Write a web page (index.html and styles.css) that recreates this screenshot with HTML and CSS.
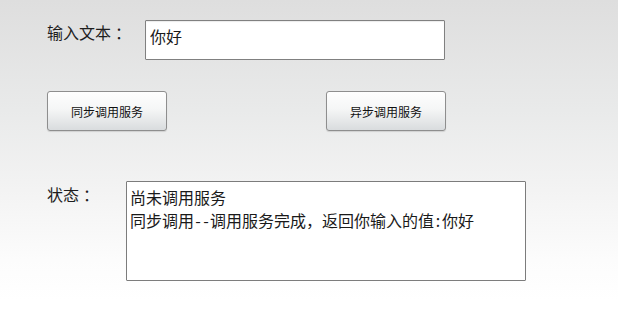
FILE: index.html
```html
<!DOCTYPE html>
<html lang="zh-CN">
<head>
<meta charset="utf-8">
<title>调用服务</title>
<link rel="stylesheet" href="styles.css">
</head>
<body>
<div class="page">
  <div class="row row-input">
    <label class="label label-input" for="txt">输入文本<span class="colon">：</span></label>
    <input id="txt" class="text-field" type="text" value="你好">
  </div>
  <div class="row row-buttons">
    <button class="btn" type="button">同步调用服务</button>
    <button class="btn" type="button">异步调用服务</button>
  </div>
  <div class="row row-status">
    <div class="label label-status">状态<span class="colon">：</span></div>
    <div class="status-box" role="textbox" aria-readonly="true">
      <div class="status-line">尚未调用服务</div>
      <div class="status-line">同步调用<span class="half">-</span><span class="half">-</span>调用服务完成，返回你输入的值<span class="half">:</span>你好</div>
    </div>
  </div>
</div>
</body>
</html>
```
FILE: styles.css
```css
html, body {
  margin: 0;
  padding: 0;
  background: #ffffff;
}
body {
  font-family: "Noto Sans CJK SC", "Noto Sans", sans-serif;
  color: #1c1c1c;
}
.page {
  width: 618px;
  height: 330px;
  box-sizing: border-box;
  padding: 20px 0 0 47px;
  background: linear-gradient(to bottom, #dedede 0px, #e9eaea 110px, #f3f3f3 190px, #fcfcfc 260px, #ffffff 300px);
}
.row {
  display: flex;
  align-items: flex-start;
}
.label {
  font-size: 16px;
  line-height: 23px;
  color: #1e1e1e;
}
.colon {
  display: inline-block;
  width: 16px;
  text-align: center;
  text-indent: 4px;
}
.label-input {
  width: 98px;
  padding-top: 1px;
}
.text-field {
  width: 300px;
  height: 40px;
  box-sizing: border-box;
  margin: 0;
  border: 1px solid #808080;
  border-radius: 1px;
  background: #ffffff;
  padding: 3px 4px 12px 4px;
  font-family: "Noto Sans CJK SC", "Noto Sans", sans-serif;
  font-size: 16px;
  line-height: 23px;
  color: #1a1a1a;
  display: block;
  box-shadow: inset 0 1px 1px rgba(0,0,0,0.08);
}
.row-buttons {
  margin-top: 31px;
  gap: 159px;
}
.btn {
  width: 120px;
  height: 40px;
  box-sizing: border-box;
  margin: 0;
  padding: 0;
  border: 1px solid #8e8e8e;
  border-radius: 3px;
  background: linear-gradient(to bottom, #fefefe 0%, #f5f6f6 45%, #e6e8e9 75%, #d9dcde 100%);
  box-shadow: 0 1px 1px rgba(0,0,0,0.12);
  font-family: "Noto Sans CJK SC", "Noto Sans", sans-serif;
  font-size: 12px;
  color: #111111;
}
.row-status {
  margin-top: 50px;
}
.label-status {
  width: 79px;
  padding-top: 2px;
}
.status-box {
  width: 400px;
  height: 100px;
  box-sizing: border-box;
  border: 1px solid #7c7c7c;
  border-radius: 1px;
  background: #ffffff;
  padding: 4px 3px;
  overflow: hidden;
  font-size: 16px;
  line-height: 23px;
  color: #1a1a1a;
}
.status-line {
  white-space: nowrap;
}
.half {
  display: inline-block;
  width: 8px;
  text-align: center;
}
```
